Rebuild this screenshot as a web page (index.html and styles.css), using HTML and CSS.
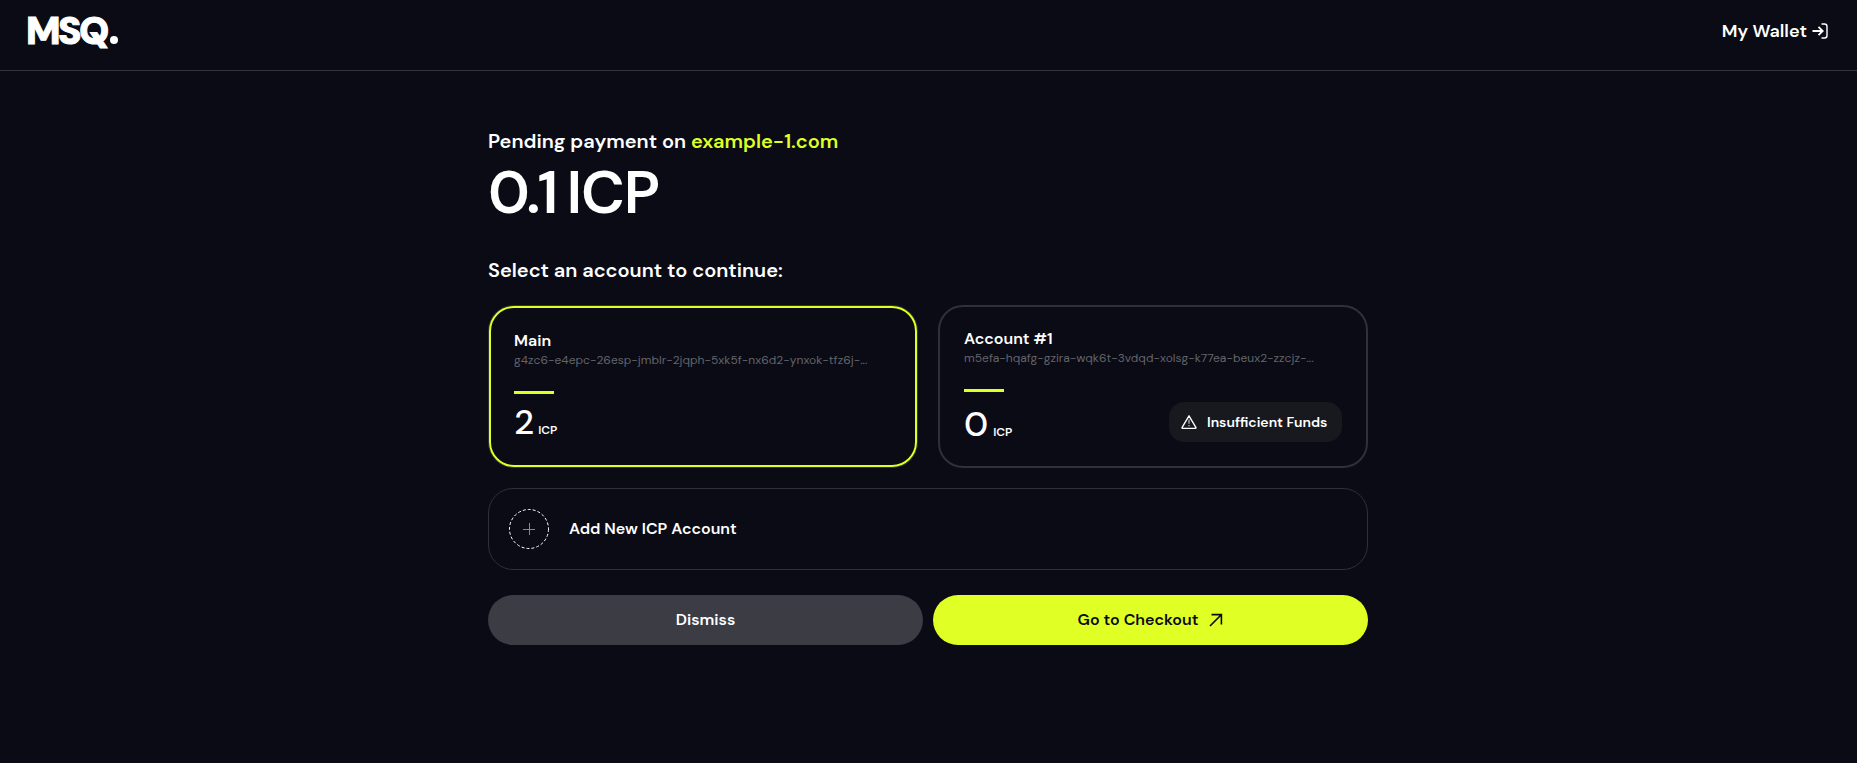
FILE: index.html
```html
<!DOCTYPE html>
<html lang="en">
<head>
<meta charset="utf-8">
<title>MSQ – Payment</title>
<link rel="stylesheet" href="styles.css">
</head>
<body>
<header class="header">
  <div class="logo">MSQ<span class="logo-dot"></span></div>
  <a class="wallet"><span class="wallet-label">My Wallet</span>
    <svg class="wallet-icon" width="16" height="16" viewBox="0 0 16 16" fill="none" stroke="#fff"><path d="M0.5 8H10M6.5 3.8 10.7 8 6.5 12.2" stroke-width="1.8"/><path d="M9.5 1H12.5Q15 1 15 3.5V12.5Q15 15 12.5 15H9.5" stroke-width="1.4"/></svg>
  </a>
</header>
<main class="page">
  <p class="pending">Pending payment on <span class="site">example-1.com</span></p>
  <h1 class="amount">0.1 ICP</h1>
  <h2 class="prompt">Select an account to continue:</h2>
  <section class="accounts">
    <article class="card selected">
      <h3 class="name">Main</h3>
      <p class="address">g4zc6-e4epc-26esp-jmblr-2jqph-5xk5f-nx6d2-ynxok-tfz6j-...</p>
      <div class="bar"></div>
      <div class="bottom"><div class="balance"><span class="num">2</span><span class="unit">ICP</span></div></div>
    </article>
    <article class="card">
      <h3 class="name">Account #1</h3>
      <p class="address">m5efa-hqafg-gzira-wqk6t-3vdqd-xolsg-k77ea-beux2-zzcjz-...</p>
      <div class="bar"></div>
      <div class="bottom"><div class="balance"><span class="num">0</span><span class="unit">ICP</span></div>
        <div class="badge">
          <svg width="16" height="16" viewBox="0 0 16 16" fill="none" stroke="#fff"><path d="M8 1.8 15 13.6Q15.2 14.3 14.4 14.3H1.6Q.8 14.3 1 13.6Z" stroke-width="1.35" stroke-linejoin="round"/><path d="M8 5.5V9.8M8 11V12.3" stroke-width="1.2" opacity=".75"/></svg>
          <span>Insufficient Funds</span>
        </div>
      </div>
    </article>
  </section>
  <section class="add">
    <svg width="40" height="40" viewBox="0 0 40 40" fill="none"><circle cx="20" cy="20" r="19.5" stroke="#fff" stroke-dasharray="3 2"/><path d="M14 20.5H26M20.5 14V26" stroke="#88888c"/></svg>
    <span class="add-label">Add New ICP Account</span>
  </section>
  <div class="actions">
    <button class="btn dismiss"><span>Dismiss</span></button>
    <button class="btn checkout"><span>Go to Checkout</span>
      <svg width="14" height="14" viewBox="0 0 14 14" fill="none" stroke="#0a0b15" stroke-width="1.6"><path d="M1 13 12 2M2.5 1.6H12.4V11.5"/></svg>
    </button>
  </div>
</main>
</body>
</html>
```
FILE: styles.css
```css
* { box-sizing: border-box; margin: 0; padding: 0; }
body { min-height: 763px; background: #0a0b15; color: #fff; font-family: "DM Sans", Inter, sans-serif; font-weight: 600; font-size: 16px; white-space: nowrap; }
svg { display: block; flex: none; }
.header { height: 71px; padding: 0 28px 0 26px; border-bottom: 1px solid #33343c; display: flex; justify-content: space-between; }
.logo { display: flex; align-items: flex-end; height: 45px; font-size: 38.5px; line-height: 28px; font-weight: 900; letter-spacing: -2.6px; -webkit-text-stroke: 1px #fff; }
.logo-dot { width: 8px; height: 8px; margin: 0 0 1px 3px; border-radius: 50%; background: #fff; }
.wallet { display: flex; align-items: center; gap: 5px; height: 62px; padding-right: 1px; }
.wallet-label { font-size: 18px; line-height: 24px; }
.page { width: 880px; margin: 57px 0 0 488px; }
.pending { height: 26px; font-size: 20px; line-height: 26px; }
.site { color: #dfff25; }
.amount { height: 76px; font-size: 60px; line-height: 78px; font-weight: 600; letter-spacing: -1.2px; word-spacing: -4px; }
.prompt { height: 26px; margin-top: 27px; font-size: 20px; line-height: 26px; font-weight: 600; }
.accounts { display: grid; grid-template-columns: 430px 430px; gap: 20px; margin-top: 22px; }
.card { height: 163px; padding: 22px 24px; border: 2px solid #303038; border-radius: 25px; }
.card.selected { height: 161px; margin: 1px; width: 428px; padding: 23px 23px; border-color: #dfff25; box-shadow: 0 0 0 1px #303038; }
.name { height: 20px; font-size: 16px; line-height: 20px; font-weight: 600; }
.address { height: 16px; margin-top: 1px; font-size: 12px; line-height: 16px; font-weight: 400; letter-spacing: .02px; color: #64646a; }
.bar { width: 40px; height: 3px; margin-top: 23px; background: #dfff25; }
.bottom { display: flex; justify-content: space-between; margin-top: 10px; height: 40px; align-items: center; }
.selected .bottom { height: 36px; }
.balance { display: flex; align-items: baseline; gap: 5px; height: 36px; line-height: 40px; }
.selected .balance { height: 40px; gap: 4px; }
.num { font-size: 35px; font-weight: 500; }
.unit { font-size: 12px; }
.badge { width: 173px; height: 40px; padding-left: 12px; border-radius: 15px; background: #18181f; display: flex; align-items: center; gap: 10px; font-size: 14px; }
.add { height: 82px; margin-top: 20px; padding-left: 20px; border: 1px solid #303038; border-radius: 25px; display: flex; align-items: center; gap: 20px; }
.add-label, .btn span { padding-bottom: 2px; }
.actions { display: grid; grid-template-columns: 435px 435px; gap: 10px; margin-top: 25px; }
.btn { height: 50px; border: 0; border-radius: 25px; font: inherit; display: flex; align-items: center; justify-content: center; gap: 11px; }
.dismiss { background: #3c3c45; color: #fff; }
.checkout { background: #dfff25; color: #0a0b15; }
```
